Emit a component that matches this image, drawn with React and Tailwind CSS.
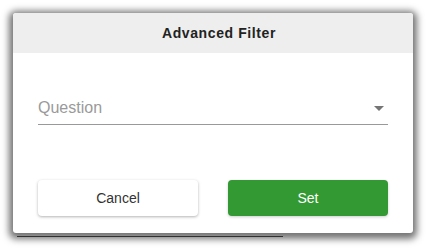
import React from 'react';

const FilterDialog = () => {
  return (
    <div className="relative w-[400px] h-[220px] bg-white rounded-[3px] shadow-[0_2px_7px_4px_rgba(0,0,0,0.55)] flex flex-col overflow-hidden">
      <div className="h-[40px] bg-[#eeeeee] flex items-center justify-center shrink-0">
        <span className="text-[14px] font-bold text-[#222] tracking-[0.6px] pl-[12px]">Advanced Filter</span>
      </div>
      <div className="flex-1 flex flex-col px-[25px]">
        <div className="mt-[39px] h-[33px] flex items-center justify-between border-b border-[#999]">
          <span className="text-[16px] text-[#9a9a9a] leading-none">Question</span>
          <svg width="10" height="5" viewBox="0 0 10 5" className="mr-[4px]">
            <path d="M0 0 L10 0 L5 5 Z" fill="#757575" />
          </svg>
        </div>
        <div className="mt-[55px] flex gap-[30px]">
          <button className="w-[160px] h-[36px] rounded-[4px] bg-white text-[14px] text-[#333] shadow-[0_1px_3px_rgba(0,0,0,0.3)]">
            Cancel
          </button>
          <button className="w-[160px] h-[36px] rounded-[4px] bg-[#339933] text-[14px] text-white shadow-[0_1px_3px_rgba(0,0,0,0.2)]">
            Set
          </button>
        </div>
      </div>
    </div>
  );
};

export default function App() {
  return (
    <div className="w-[428px] h-[250px] bg-white relative font-['Liberation_Sans',Arial,sans-serif] pt-[13px] pl-[13px]">
      <div className="absolute left-[17px] top-[236px] w-[266px] h-[1px] bg-[#555]" />
      <FilterDialog />
    </div>
  );
}
